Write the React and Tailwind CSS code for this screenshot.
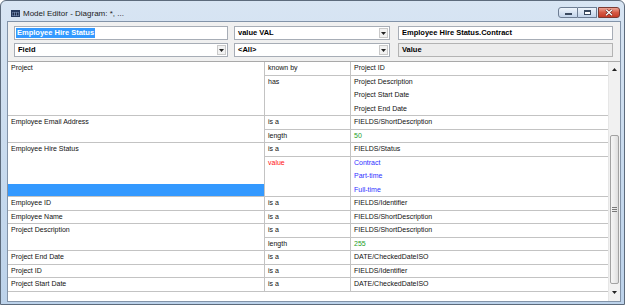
import React from "react";

const data = [
  {
    name: "Project",
    rels: [
      { rel: "known by", vals: [{ t: "Project ID" }] },
      { rel: "has", vals: [{ t: "Project Description" }, { t: "Project Start Date" }, { t: "Project End Date" }] },
    ],
  },
  {
    name: "Employee Email Address",
    rels: [
      { rel: "is a", vals: [{ t: "FIELDS/ShortDescription" }] },
      { rel: "length", vals: [{ t: "50", c: "green" }] },
    ],
  },
  {
    name: "Employee Hire Status",
    selected: true,
    rels: [
      { rel: "is a", vals: [{ t: "FIELDS/Status" }] },
      {
        rel: "value",
        red: true,
        vals: [
          { t: "Contract", c: "blue" },
          { t: "Part-time", c: "blue" },
          { t: "Full-time", c: "blue" },
        ],
      },
    ],
  },
  { name: "Employee ID", rels: [{ rel: "is a", vals: [{ t: "FIELDS/Identifier" }] }] },
  { name: "Employee Name", rels: [{ rel: "is a", vals: [{ t: "FIELDS/ShortDescription" }] }] },
  {
    name: "Project Description",
    rels: [
      { rel: "is a", vals: [{ t: "FIELDS/ShortDescription" }] },
      { rel: "length", vals: [{ t: "255", c: "green" }] },
    ],
  },
  { name: "Project End Date", rels: [{ rel: "is a", vals: [{ t: "DATE/CheckedDateISO" }] }] },
  { name: "Project ID", rels: [{ rel: "is a", vals: [{ t: "FIELDS/Identifier" }] }] },
  { name: "Project Start Date", rels: [{ rel: "is a", vals: [{ t: "DATE/CheckedDateISO" }] }] },
];

const tone = {
  black: "text-[#111]",
  green: "text-[#1e9e1e]",
  blue: "text-[#3030ff]",
};

const Arrow = ({ up }) => (
  <svg width="5" height="3" viewBox="0 0 5 3">
    <path d={up ? "M0 3h5L2.5 0z" : "M0 0h5L2.5 3z"} fill="#222" />
  </svg>
);

const Combo = ({ className, text }) => (
  <div className={`${className} h-[14px] bg-white border border-[#a7adb6] flex items-center`}>
    <span className="flex-1 pl-[3px] text-[7.5px] font-bold leading-none text-black">{text}</span>
    <div className="w-[9px] h-[10px] mr-[1px] bg-[#f2f2f2] border border-[#c9c9c9] flex items-center justify-center">
      <Arrow />
    </div>
  </div>
);

const Cell = ({ className = "", children }) => (
  <div className={`h-[13.5px] px-[3px] text-[7px] leading-[11px] whitespace-nowrap ${className}`}>{children}</div>
);

const App = () => {
  return (
    <div className="w-[628px] h-[306px] bg-white overflow-hidden font-['Liberation_Sans',Arial,sans-serif]">
      <div className="w-[625px] h-[305px] flex flex-col rounded-t-[6px] border border-[#5d6b7c] bg-gradient-to-b from-[#d8e5f3] via-[#c9dbee] to-[#bcd2ea]">
        {/* title bar */}
        <div className="h-[20px] flex items-start">
          <svg className="ml-[10px] mt-[9px]" width="9" height="7" viewBox="0 0 9 7">
            <rect x="0" y="0" width="9" height="7" fill="#263a5e" />
            <rect x="1" y="2" width="7" height="4" fill="#7d93b8" />
            <rect x="1.5" y="2.5" width="1.5" height="3" fill="#1b2a48" />
            <rect x="3.75" y="2.5" width="1.5" height="3" fill="#1b2a48" />
            <rect x="6" y="2.5" width="1.5" height="3" fill="#1b2a48" />
          </svg>
          <span className="ml-[3px] mt-[8px] text-[8px] leading-[10px] text-[#1c1c1c]">Model Editor - Diagram: *, ...</span>
          <div className="ml-auto mr-[4px] mt-[6px] flex">
            <div className="w-[20px] h-[11px] rounded-l-[3px] border border-[#6d7d93] bg-gradient-to-b from-[#eef4fb] to-[#c2d4ea] flex items-end justify-center pb-[2px]">
              <div className="w-[7px] h-[2px] bg-white border border-[#3a4a60]" />
            </div>
            <div className="w-[19px] h-[11px] border-y border-r border-[#6d7d93] bg-gradient-to-b from-[#eef4fb] to-[#c2d4ea] flex items-center justify-center">
              <div className="w-[7px] h-[5px] border border-[#3a4a60] border-t-2 bg-white" />
            </div>
            <div className="w-[22px] h-[11px] ml-[1px] rounded-r-[3px] border border-[#7a3a32] bg-gradient-to-b from-[#eba293] via-[#d65a45] to-[#c63b26] flex items-center justify-center">
              <svg width="8" height="7" viewBox="0 0 8 7">
                <path d="M1 0.8L7 6.2M7 0.8L1 6.2" stroke="#5a1a12" strokeWidth="2.4" />
                <path d="M1 0.8L7 6.2M7 0.8L1 6.2" stroke="#fff" strokeWidth="1.4" />
              </svg>
            </div>
          </div>
        </div>

        {/* client area */}
        <div className="ml-[6px] mr-[3px] mb-[2px] flex-1 flex flex-col border border-[#8293a8] bg-[#f0f0f0]">
          {/* top editors */}
          <div className="h-[39px] pt-[4px] pl-[6px] flex flex-col gap-[3px]">
            <div className="flex">
              <div className="w-[214px] h-[14px] bg-white border border-[#a7adb6] flex items-center pl-[1px]">
                <span className="bg-[#3399ff] text-white text-[7.5px] font-bold leading-[10px] px-[1px]">Employee Hire Status</span>
              </div>
              <Combo className="w-[156px] ml-[6px]" text="value VAL" />
              <div className="w-[215px] ml-[8px] h-[14px] bg-white border border-[#a7adb6] flex items-center pl-[3px]">
                <span className="text-[7.5px] font-bold leading-none text-black">Employee Hire Status.Contract</span>
              </div>
            </div>
            <div className="flex">
              <Combo className="w-[214px]" text="Field" />
              <Combo className="w-[156px] ml-[6px]" text="<All>" />
              <div className="w-[215px] ml-[8px] h-[14px] bg-[#ececec] border border-[#b3b3b3] flex items-center pl-[3px]">
                <span className="text-[7.5px] font-bold leading-none text-black">Value</span>
              </div>
            </div>
          </div>

          {/* grid */}
          <div className="flex-1 flex border-t border-[#a9a9a9] bg-white">
            <div className="w-[600px] flex flex-col">
              {data.map((e) => (
                <div key={e.name} className="flex">
                  <div className="w-[257px] border-r border-[#c3c3c3] shadow-[inset_0_-1px_0_#c3c3c3] flex flex-col">
                    <Cell className="text-[#111]">{e.name}</Cell>
                    {e.selected && <div className="mt-auto mb-[1px] h-[12.5px] bg-[#3399ff]" />}
                  </div>
                  <div className="flex-1 flex flex-col">
                    {e.rels.map((r) => (
                      <div key={r.rel} className="flex shadow-[inset_0_-1px_0_#c3c3c3]">
                        <div className="w-[86px] border-r border-[#c3c3c3]">
                          <Cell className={r.red ? "text-[#ff1010]" : "text-[#111]"}>{r.rel}</Cell>
                        </div>
                        <div className="flex-1 flex flex-col">
                          {r.vals.map((v) => (
                            <Cell key={v.t} className={tone[v.c || "black"]}>
                              {v.t}
                            </Cell>
                          ))}
                        </div>
                      </div>
                    ))}
                  </div>
                </div>
              ))}
            </div>

            {/* scrollbar */}
            <div className="w-[12px] flex flex-col bg-[#f1f1f1] border-l border-[#e6e6e6]">
              <div className="h-[14px] flex items-center justify-center">
                <Arrow up />
              </div>
              <div className="h-[59px]" />
              <div className="h-[149px] mx-[1px] rounded-[2px] border border-[#a2a2a2] bg-gradient-to-r from-[#f6f6f6] via-[#ececec] to-[#dedede] flex flex-col items-center justify-center gap-[1px]">
                <div className="w-[5px] h-[1px] bg-[#7a7a7a]" />
                <div className="w-[5px] h-[1px] bg-[#7a7a7a]" />
                <div className="w-[5px] h-[1px] bg-[#7a7a7a]" />
              </div>
              <div className="flex-1 flex items-center justify-center">
                <Arrow />
              </div>
            </div>
          </div>
        </div>
      </div>
    </div>
  );
};

export default App;
